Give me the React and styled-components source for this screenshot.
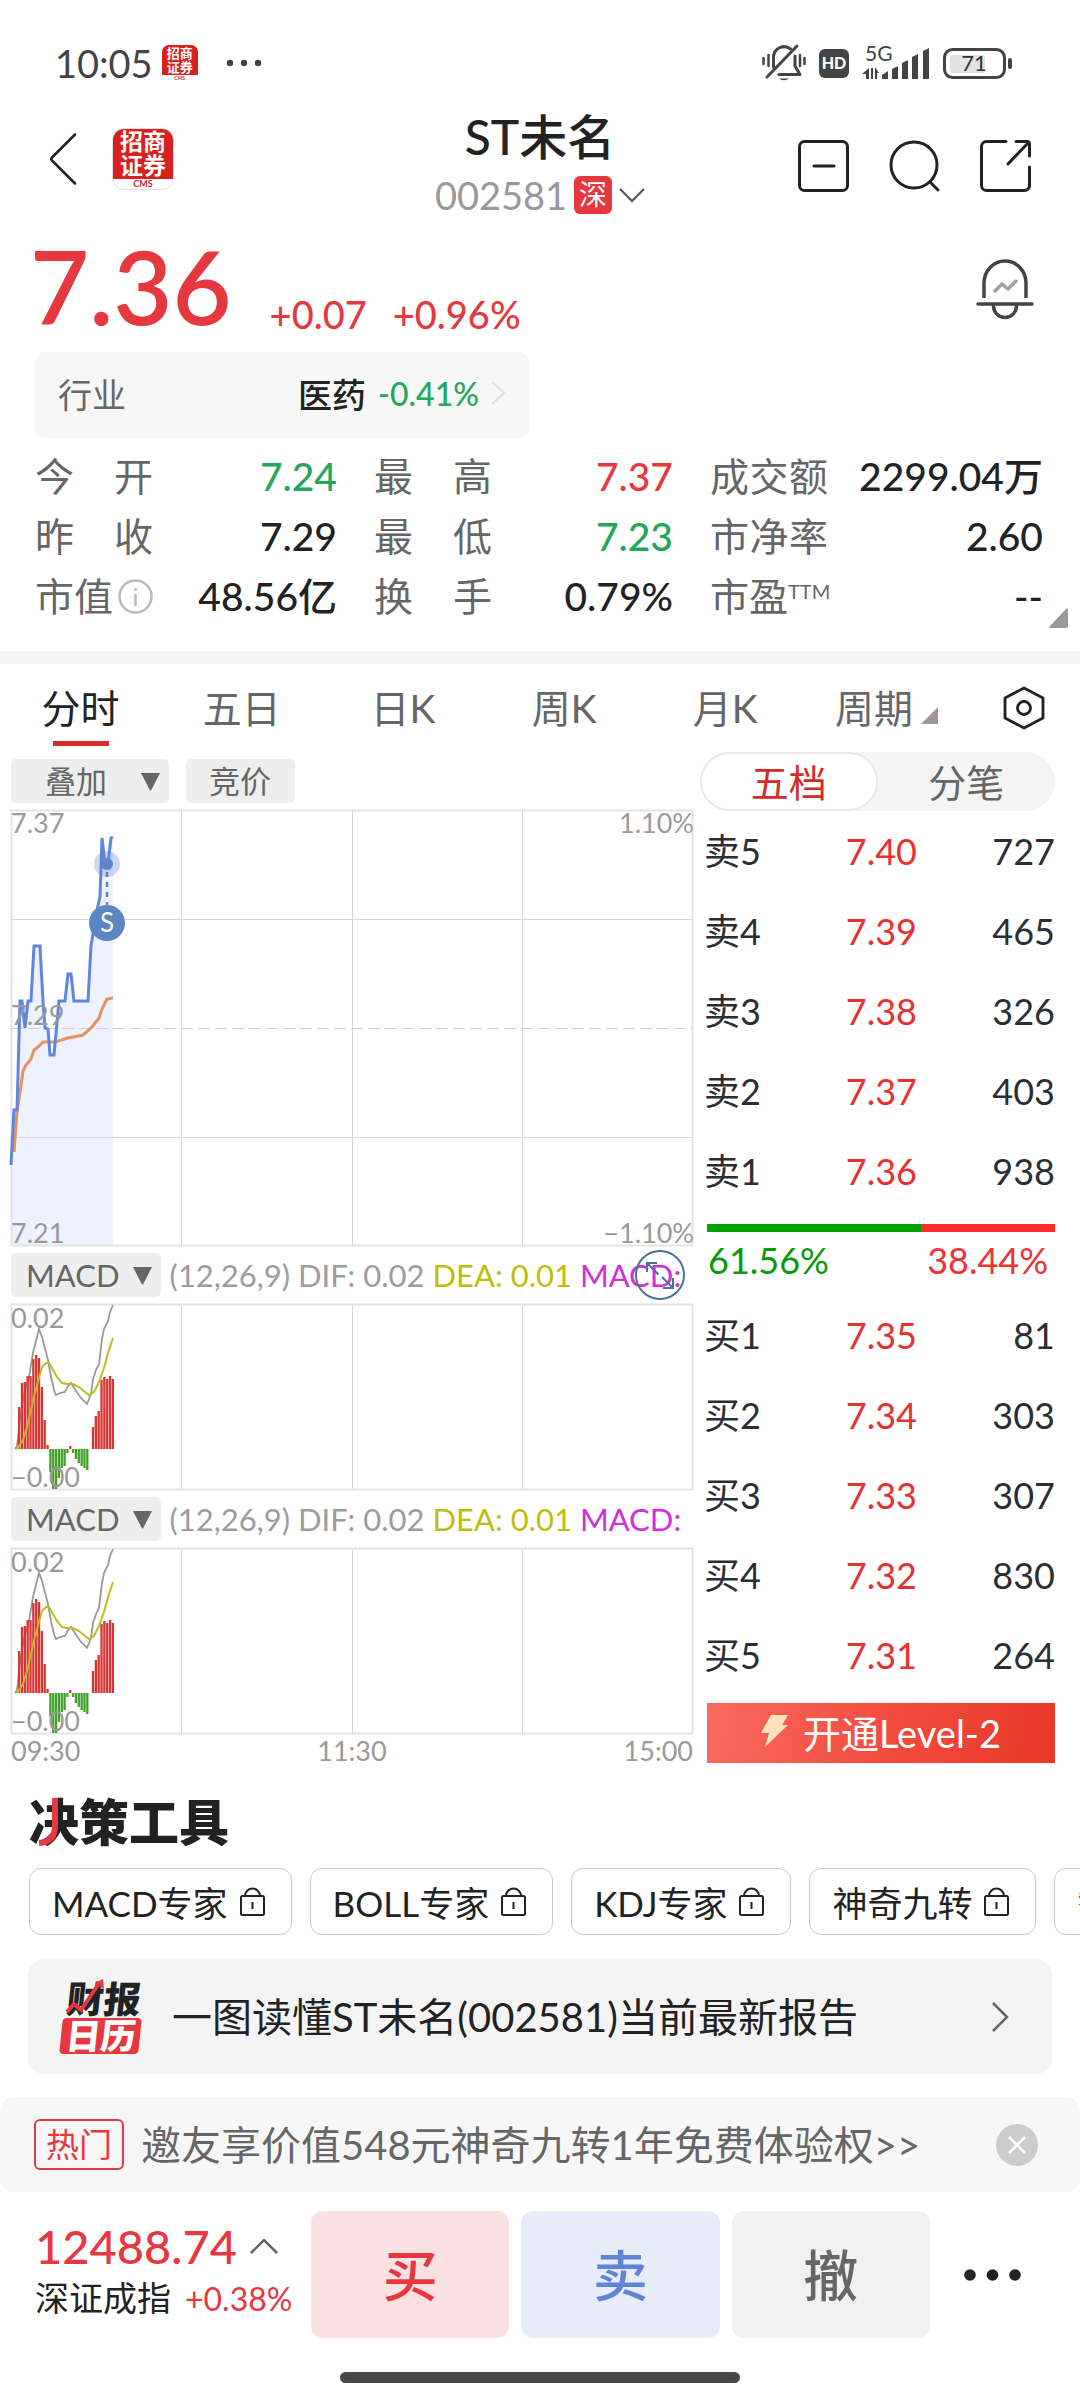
import { useState } from 'react';
import styled, { createGlobalStyle } from 'styled-components';

const GlobalStyle = createGlobalStyle`
  * {
    box-sizing: border-box;
  }

  body {
    margin: 0;
    background: #fff;
    color: #222;
    font-family: Lato, "Noto Sans CJK SC", sans-serif;
    overflow-x: hidden;
  }

  button {
    margin: 0;
    padding: 0;
    border: none;
    background: none;
    color: inherit;
    font: inherit;
    cursor: pointer;
  }

  svg {
    display: block;
    flex: none;
    overflow: visible;
  }

  h1, h2, p, dl, dd {
    margin: 0;
  }
`;

const RED = '#e5393f';
const GREEN = '#22a75d';

const tones = { up: RED, down: GREEN, flat: '#222' };

const Page = styled.div`
  display: flex;
  flex-direction: column;
`;

/* status bar */

const StatusBar = styled.div`
  display: flex;
  align-items: center;
  justify-content: space-between;
  padding: 43px 67px 0 55px;
  height: 83px;
  color: #444;
`;

const StatusGroup = styled.div`
  display: flex;
  align-items: center;
  gap: ${(p) => p.$gap}px;
`;

const Clock = styled.span`
  font-size: 38px;
  line-height: 40px;
`;

const LogoBox = styled.span`
  display: flex;
  flex-direction: column;
  justify-content: space-between;
  overflow: hidden;
  width: ${(p) => p.$size}px;
  height: ${(p) => p.$size}px;
  border-radius: ${(p) => (p.$size > 50 ? 12 : 7)}px;
  border: ${(p) => (p.$size > 50 ? 1 : 0)}px solid #e6dede;
  background: #fff;
`;

const LogoChars = styled.span`
  display: flex;
  flex: 1;
  align-items: center;
  justify-content: center;
  padding-bottom: 1px;
  background: #d8201f;
  color: #fff;
  font-size: ${(p) => p.$font}px;
  line-height: ${(p) => p.$font + 1}px;
  font-weight: 700;
  text-align: center;
`;

const LogoFoot = styled.span`
  color: #c9282a;
  font-size: ${(p) => p.$font}px;
  line-height: ${(p) => p.$font + 1}px;
  font-weight: 700;
  text-align: center;
`;

/* header */

const Header = styled.header`
  display: grid;
  grid-template-columns: 1fr auto 1fr;
  align-items: center;
  padding: 29px 49px 0;
`;

const HeaderLeft = styled.div`
  display: flex;
  align-items: center;
  gap: 35px;
  padding-bottom: 10px;
`;

const HeaderRight = styled.div`
  display: flex;
  justify-content: flex-end;
  gap: 40px;
  padding-top: 4px;
`;

const Title = styled.h1`
  font-size: 48px;
  line-height: 50px;
  font-weight: 500;
  text-align: center;
`;

const CodeRow = styled.button`
  display: flex;
  align-items: center;
  gap: 7px;
  margin-top: 13px;
  color: #999;
  font-size: 38px;
  line-height: 40px;
`;

const Market = styled.span`
  width: 38px;
  height: 38px;
  border-radius: 6px;
  background: ${RED};
  color: #fff;
  font-size: 28px;
  line-height: 37px;
  text-align: center;
`;

/* quote */

const Quote = styled.section`
  padding: 19px 37px 0 35px;
`;

const QuoteTop = styled.div`
  display: flex;
  align-items: center;
  justify-content: space-between;
  padding-right: 9px;
`;

const PriceLine = styled.div`
  display: flex;
  align-items: flex-end;
  gap: 26px;
  color: ${RED};
  font-size: 38px;
  line-height: 48px;
  font-weight: 500;
`;

const Price = styled.strong`
  margin: 0 12px 0 -5px;
  font-size: 102px;
  line-height: 104px;
  font-weight: 600;
`;

const Industry = styled.a`
  display: flex;
  align-items: center;
  width: 494px;
  height: 86px;
  margin-top: 14px;
  padding: 0 23px 4px;
  border-radius: 10px;
  background: #f7f7f7;
  color: #666;
  font-size: 34px;
  text-decoration: none;
`;

const IndustryName = styled.span`
  margin-left: auto;
  color: #222;
  font-weight: 500;
`;

const IndustryChange = styled.span`
  margin: 0 12px;
  color: ${GREEN};
  font-size: 32px;
  font-weight: 500;
`;

const StatGrid = styled.dl`
  display: grid;
  grid-template-columns: 302fr 299fr 333fr;
  column-gap: 37px;
  padding: 8px 0 25px;
`;

const Stat = styled.div`
  display: flex;
  align-items: center;
  justify-content: space-between;
  height: 60px;
  font-size: 39px;
  line-height: 60px;
  white-space: nowrap;
`;

const StatLabel = styled.dt`
  display: flex;
  align-items: center;
  justify-content: space-between;
  width: 118px;
  color: #666;
`;

const StatValue = styled.dd`
  color: ${(p) => tones[p.$tone]};
  font-weight: 500;
`;

const Sup = styled.sup`
  align-self: flex-start;
  margin-right: auto;
  font-size: 20px;
  line-height: 50px;
`;

const StatCorner = styled.svg`
  position: absolute;
  right: 12px;
  bottom: 23px;
`;

const StatWrap = styled.div`
  position: relative;
  margin: 0 -37px 0 0;
  padding-right: 37px;
`;

const Divider = styled.div`
  height: 13px;
  background: #f2f3f5;
`;

/* chart tabs */

const Tabs = styled.nav`
  display: flex;
  height: 88px;
`;

const Tab = styled.button`
  position: relative;
  display: flex;
  flex: 1;
  align-items: center;
  justify-content: center;
  gap: 8px;
  padding-bottom: 4px;
  color: ${(p) => (p.$active ? '#222' : '#666')};
  font-size: 39px;

  &::after {
    content: '';
    position: absolute;
    bottom: 6px;
    left: 50%;
    width: 56px;
    height: 5px;
    margin-left: -28px;
    background: ${(p) => (p.$active ? '#d92b2b' : 'transparent')};
  }
`;

const TabSettings = styled.button`
  display: flex;
  flex: none;
  align-items: center;
  justify-content: center;
  width: 113px;
`;

/* charts and order book */

const Board = styled.section`
  display: grid;
  grid-template-columns: minmax(0, 1fr) 355px;
  column-gap: 7px;
  padding: 0 25px 0 11px;
`;

const ChartColumn = styled.div`
  display: flex;
  flex-direction: column;
  gap: 7px;
  padding-top: 7px;
`;

const ToolRow = styled.div`
  position: relative;
  display: flex;
  align-items: center;
  gap: ${(p) => p.$gap}px;
  height: 44px;
  font-size: 32px;
  white-space: nowrap;
`;

const Chip = styled.button`
  display: flex;
  align-items: center;
  justify-content: space-between;
  height: 44px;
  padding: 0 ${(p) => p.$right}px 0 ${(p) => p.$left}px;
  gap: ${(p) => p.$gap || 0}px;
  border-radius: 5px;
  background: #eee;
  color: #666;
  font-size: 31px;
  line-height: 44px;
`;

const Legend = styled.span`
  color: ${(p) => p.$color};
  font-size: 31px;
`;

const ZoomButton = styled.button`
  position: absolute;
  top: -3px;
  right: 8px;
`;

const ChartSvg = styled.svg`
  width: 100%;
  height: auto;
  font-family: Lato, sans-serif;
  font-size: 27px;
  fill: #999;
`;

const TimeAxis = styled.div`
  display: flex;
  justify-content: space-between;
  color: #999;
  font-size: 27px;
  line-height: 20px;
`;

const BookColumn = styled.div`
  display: flex;
  flex-direction: column;
`;

const Segmented = styled.div`
  display: flex;
  height: 59px;
  border-radius: 30px;
  background: #f4f4f4;
`;

const Segment = styled.button`
  flex: 1;
  border: 2px solid ${(p) => (p.$active ? '#e9e9e9' : 'transparent')};
  border-radius: 30px;
  background: ${(p) => (p.$active ? '#fff' : 'transparent')};
  color: ${(p) => (p.$active ? '#d42a2a' : '#666')};
  font-size: 38px;
  line-height: 52px;
`;

const Book = styled.table`
  width: 100%;
  border-collapse: collapse;
  color: #2b2e33;
  font-size: 36px;
  line-height: 44px;

  td, th {
    height: 80px;
    padding: 0;
    font-weight: 400;
    text-align: right;
  }

  th {
    width: 80px;
    padding-left: 4px;
    text-align: left;
    white-space: nowrap;
  }

  td:nth-child(2) {
    width: 137px;
    color: #e8302f;
  }
`;

const RatioBar = styled.div`
  display: flex;
  height: 8px;
  margin: 13px 0 0 7px;
  background: #fd2a2a;
`;

const RatioSell = styled.div`
  background: #00a200;
`;

const RatioText = styled.div`
  display: flex;
  justify-content: space-between;
  padding: 0 7px 7px 8px;
  color: #f03236;
  font-size: 36px;
  line-height: 56px;

  span:first-child {
    color: #069a0a;
  }
`;

const LevelButton = styled.button`
  display: flex;
  align-items: center;
  justify-content: center;
  gap: 14px;
  height: 60px;
  margin: 8px 0 0 7px;
  padding-bottom: 4px;
  background: linear-gradient(100deg, #fb6a5e, #f04b3d 55%, #e93827);
  color: #fff;
  font-size: 38px;
`;

/* decision tools */

const Tools = styled.section`
  padding: 24px 0 0 29px;
`;

const ToolsTitle = styled.h2`
  position: relative;
  font-family: "Noto Sans CJK SC", sans-serif;
  font-size: 50px;
  line-height: 64px;
  font-weight: 900;

  svg {
    position: absolute;
    top: 11px;
    left: 9px;
  }
`;

const ToolList = styled.div`
  display: flex;
  gap: 18px;
  margin-top: 17px;
  overflow: hidden;
`;

const ToolPill = styled.button`
  display: flex;
  flex: none;
  align-items: center;
  gap: 12px;
  height: 67px;
  padding: 0 26px 0 22px;
  border: 1px solid #ccc;
  border-radius: 12px;
  color: #222;
  font-size: 35px;
  white-space: nowrap;
`;

const Report = styled.a`
  display: flex;
  align-items: center;
  height: 115px;
  margin: 24px 28px 0;
  padding: 0 43px 0 34px;
  border-radius: 16px;
  background: #f4f4f4;
  color: #222;
  font-size: 40px;
  text-decoration: none;
  white-space: nowrap;
`;

const ReportText = styled.span`
  flex: 1;
  margin-left: 29px;
  padding-bottom: 3px;
`;

const Promo = styled.div`
  display: flex;
  align-items: center;
  height: 95px;
  margin-top: 23px;
  padding: 0 42px 0 34px;
  border-radius: 14px;
  background: #f7f7f7;
`;

const HotTag = styled.span`
  height: 51px;
  padding: 0 10px;
  border: 2px solid ${RED};
  border-radius: 6px;
  color: ${RED};
  font-size: 33px;
  line-height: 46px;
`;

const PromoLink = styled.a`
  flex: 1;
  margin-left: 17px;
  padding-bottom: 3px;
  color: #666;
  font-size: 40px;
  text-decoration: none;
  white-space: nowrap;
`;

/* trade bar */

const TradeBar = styled.footer`
  display: flex;
  align-items: center;
  gap: 12px;
  padding: 19px 59px 0 35px;
`;

const IndexBox = styled.button`
  display: flex;
  flex-direction: column;
  align-items: flex-start;
  width: 264px;
  padding-bottom: 6px;
  white-space: nowrap;
`;

const IndexValue = styled.span`
  display: flex;
  align-items: center;
  gap: 13px;
  color: ${RED};
  font-size: 47px;
  line-height: 54px;
  font-weight: 500;
`;

const IndexName = styled.span`
  font-size: 34px;
  line-height: 50px;

  em {
    margin-left: 14px;
    color: ${RED};
    font-size: 32px;
    font-style: normal;
  }
`;

const TradeButton = styled.button`
  flex: 1;
  height: 127px;
  border-radius: 12px;
  background: ${(p) => p.$bg};
  color: ${(p) => p.$color};
  font-size: 55px;
  line-height: 120px;
  font-weight: 500;
`;

const MoreButton = styled.button`
  padding-left: 22px;
`;

const HomeBar = styled.div`
  width: 37%;
  height: 11px;
  margin: 34px auto 16px;
  border-radius: 6px;
  background: #484848;
`;

const sells = [
  ['卖5', '7.40', '727'],
  ['卖4', '7.39', '465'],
  ['卖3', '7.38', '326'],
  ['卖2', '7.37', '403'],
  ['卖1', '7.36', '938'],
];

const buys = [
  ['买1', '7.35', '81'],
  ['买2', '7.34', '303'],
  ['买3', '7.33', '307'],
  ['买4', '7.32', '830'],
  ['买5', '7.31', '264'],
];

const stats = [
  { label: '今开', value: '7.24', tone: 'down' },
  { label: '最高', value: '7.37', tone: 'up' },
  { label: '成交额', value: '2299.04万', tone: 'flat' },
  { label: '昨收', value: '7.29', tone: 'flat' },
  { label: '最低', value: '7.23', tone: 'down' },
  { label: '市净率', value: '2.60', tone: 'flat' },
  { label: '市值', value: '48.56亿', tone: 'flat', info: true },
  { label: '换手', value: '0.79%', tone: 'flat' },
  { label: '市盈', value: '--', tone: 'flat', sup: 'TTM' },
];

const tabs = ['分时', '五日', '日K', '周K', '月K', '周期'];
const tools = ['MACD专家', 'BOLL专家', 'KDJ专家', '神奇九转', '智能盯盘'];

const priceLine =
  '0,355 3,300 6,300 9,191 11,191 14,218 17,191 20,191 23,136 29,136 32,191 34,218 37,219 39,245 43,245 48,191 54,191 57,164 60,164 63,191 77,191 80,136 86,100 89,87 91,28 94,54 97,54 100,28 102,27';
const avgLine =
  '3,342 6,302 9,282 12,261 15,255 20,249 23,240 27,237 32,232 44,232 57,228 72,225 81,217 88,208 91,199 96,189 102,188';
const difLine =
  '4,145 6,142 9,115 13,90 18,73 22,49 26,33 28,25 31,33 37,56 40,73 43,86 45,91 49,89 54,88 57,82 60,79 65,87 70,94 76,100 80,90 82,75 85,66 88,60 91,35 93,25 97,17 99,8 102,1';
const deaLine =
  '4,145 7,144 12,136 16,123 22,97 29,70 31,63 35,59 38,59 42,66 46,73 51,79 56,80 62,80 68,83 74,88 78,91 83,88 88,78 93,64 97,49 102,34';
const macdBars = [
  42, 66, 67, 73, 73, 90, 94, 91, 62, 29, 4, -23, -40, -40, -29, -19, -17, -4, 3, -4, -10, -14, -17, -19, -21, 0,
  22, 33, 38, 69, 72, 70, 73, 70,
];

function Logo({ size }) {
  const font = size > 50 ? 23 : 13;
  return (
    <LogoBox $size={size}>
      <LogoChars $font={font}>招商<br />证券</LogoChars>
      <LogoFoot $font={size > 50 ? 9 : 5}>CMS</LogoFoot>
    </LogoBox>
  );
}

function Triangle() {
  return (
    <svg width="19" height="19" viewBox="0 0 19 19">
      <path d="M0 1h19L10 18.500H9z" fill="#666" />
    </svg>
  );
}

function Lock() {
  return (
    <svg width="25" height="30" viewBox="0 0 25 30" fill="none" stroke="#222" strokeWidth="2">
      <rect x="1" y="9" width="23" height="19" rx="1.500" />
      <path d="M5 9a7.500 7.500 0 0 1 15 0M12.500 15v7" />
    </svg>
  );
}

function StatusIcons() {
  return (
    <StatusGroup $gap={13}>
      <svg width="44" height="40" viewBox="0 0 44 40" fill="none" stroke="#444" strokeWidth="3" strokeLinecap="round">
        <path d="M11.500 24V14a10.500 10.500 0 0 1 17-8M5 34 35 3" />
        <path d="M33 13v10l5 8.500H17" strokeLinejoin="round" />
        <path d="M17 35.500h10a6 4 0 0 1-10 0z" fill="#444" stroke="none" />
        <path d="M1.500 15v6M6.500 12v11M38 12v11M42.500 15v6" strokeWidth="2.500" />
      </svg>
      <svg width="30" height="29" viewBox="0 0 30 29">
        <rect width="30" height="29" rx="6" fill="#444" />
        <text x="15" y="20" fill="#fff" fontFamily="Lato, sans-serif" fontSize="16" fontWeight="900" textAnchor="middle">
          HD
        </text>
      </svg>
      <svg width="68" height="36" viewBox="0 0 68 36" fill="#444">
        <text x="3" y="16" fontFamily="Lato, sans-serif" fontSize="21">5G</text>
        <path d="M7 23v11H4v-5H0zM9 23h2v11H9zM13 22l4 6h-2v6h-2z" />
        <path d="M20 30l6-4v8h-6zM30 24l6-3v13h-6zM40 18l6-3v19h-6zM50 12l6-3v25h-6zM61 6l6-3v31h-6z" />
      </svg>
      <svg width="70" height="31" viewBox="0 0 70 31">
        <rect x="1.500" y="1.500" width="60" height="28" rx="8" fill="none" stroke="#444" strokeWidth="3" />
        <rect x="7" y="7" width="35" height="18" rx="3" fill="#e2e2e2" />
        <rect x="65" y="10" width="4" height="11" rx="2" fill="#444" />
        <text x="31" y="23" fill="#333" fontFamily="Lato, sans-serif" fontSize="22" textAnchor="middle">71</text>
      </svg>
    </StatusGroup>
  );
}

function Grid({ height }) {
  return (
    <g fill="none" stroke="#d6d6d6">
      <path d={`M170.500 0v${height}M341.500 0v${height}M511.500 0v${height}`} />
      <rect x="0.500" y="0.500" width="681" height={height - 1} stroke="#e4e4e4" strokeWidth="2" />
    </g>
  );
}

function PriceChart() {
  return (
    <ChartSvg viewBox="0 0 682 436" role="img" aria-label="分时">
      <polygon points={`${priceLine} 102,436 0,436`} fill="#edf2fe" />
      <Grid height={436} />
      <path d="M0 109.500h682M0 327.500h682" stroke="#d9d9d9" />
      <path d="M0 218.500h682" stroke="#d0d0d0" strokeDasharray="12 5" />
      <polyline points={avgLine} fill="none" stroke="#e8915a" strokeWidth="3" />
      <polyline points={priceLine} fill="none" stroke="#5f86de" strokeWidth="3" />
      <circle cx="96" cy="54" r="13" fill="#5b86c2" opacity="0.3" />
      <circle cx="96" cy="54" r="6" fill="#5b86c2" />
      <path d="M96 62v34" stroke="#5b86c2" strokeWidth="2.500" strokeDasharray="5 5" />
      <circle cx="96" cy="113" r="18" fill="#5b86c2" />
      <text x="96" y="122" fill="#fff" fontSize="26" textAnchor="middle">S</text>
      <text x="0" y="23">7.37</text>
      <text x="0" y="215">7.29</text>
      <text x="0" y="433">7.21</text>
      <text x="683" y="23" textAnchor="end">1.10%</text>
      <text x="683" y="433" textAnchor="end">−1.10%</text>
    </ChartSvg>
  );
}

function MacdPanel({ zoom }) {
  return (
    <>
      <ToolRow $gap={8}>
        <Chip $left={15} $right={9} $gap={14}>
          MACD
          <Triangle />
        </Chip>
        <Legend $color="#9c9ca0">(12,26,9)</Legend>
        <Legend $color="#9c9ca0">DIF: 0.02</Legend>
        <Legend $color="#bfbd0c">DEA: 0.01</Legend>
        <Legend $color="#d12fdc">MACD:</Legend>
        {zoom && (
          <ZoomButton aria-label="全屏">
            <svg width="50" height="50" viewBox="0 0 50 50" fill="none" stroke="#4a7296" strokeWidth="2">
              <circle cx="25" cy="25" r="24" />
              <path d="M12 22V13h10M12.500 13.500l11 11M38 28v10H28M37.500 37.500 27 27" />
            </svg>
          </ZoomButton>
        )}
      </ToolRow>
      <ChartSvg viewBox="0 0 682 186" role="img" aria-label="MACD">
        <Grid height={186} />
        <polyline points={difLine} fill="none" stroke="#999" strokeWidth="1.800" />
        {macdBars.map((v, i) => (
          <rect
            key={i}
            x={7 + i * 2.84}
            y={v > 0 ? 145 - v : 145}
            width="2.3"
            height={Math.abs(v)}
            fill={v > 0 ? '#d93432' : '#3fa02a'}
          />
        ))}
        <polyline points={deaLine} fill="none" stroke="#bfbd1c" strokeWidth="2" />
        <text x="0" y="24">0.02</text>
        <text x="0" y="183">−0.00</text>
      </ChartSvg>
    </>
  );
}

function BookRows({ rows }) {
  return (
    <Book>
      <tbody>
        {rows.map(([name, price, amount]) => (
          <tr key={name}>
            <th scope="row">{name}</th>
            <td>{price}</td>
            <td>{amount}</td>
          </tr>
        ))}
      </tbody>
    </Book>
  );
}

function App() {
  const [tab, setTab] = useState('分时');
  const [book, setBook] = useState('五档');
  const [promo, setPromo] = useState(true);

  return (
    <Page>
      <GlobalStyle />
      <StatusBar>
        <StatusGroup $gap={9}>
          <Clock>10:05</Clock>
          <Logo size={36} />
          <svg width="62" height="8" viewBox="0 0 62 8" fill="#444">
            <circle cx="23" cy="4" r="3.200" />
            <circle cx="37" cy="4" r="3.200" />
            <circle cx="51" cy="4" r="3.200" />
          </svg>
        </StatusGroup>
        <StatusIcons />
      </StatusBar>

      <Header>
        <HeaderLeft>
          <button aria-label="返回">
            <svg width="28" height="52" viewBox="0 0 28 52" fill="none" stroke="#222" strokeWidth="2.500" strokeLinecap="round" strokeLinejoin="round">
              <path d="M26 1.500 3 24.500q-1.500 1.500 0 3l23 23" />
            </svg>
          </button>
          <Logo size={62} />
        </HeaderLeft>
        <div>
          <Title>ST未名</Title>
          <CodeRow>
            002581
            <Market>深</Market>
            <svg width="26" height="15" viewBox="0 0 26 15" fill="none" stroke="#555" strokeWidth="2.200">
              <path d="M1 1l12 12L25 1" />
            </svg>
          </CodeRow>
        </div>
        <HeaderRight>
          <button aria-label="删自选">
            <svg width="51" height="52" viewBox="0 0 51 52" fill="none" stroke="#222" strokeWidth="3" strokeLinecap="round">
              <rect x="1.500" y="1.500" width="48" height="49" rx="5" />
              <path d="M16 26h20" />
            </svg>
          </button>
          <button aria-label="搜索">
            <svg width="51" height="52" viewBox="0 0 51 52" fill="none" stroke="#222" strokeWidth="3" strokeLinecap="round">
              <circle cx="25" cy="25" r="23" />
              <path d="M41 42l8 8" />
            </svg>
          </button>
          <button aria-label="分享">
            <svg width="51" height="52" viewBox="0 0 51 52" fill="none" stroke="#222" strokeWidth="3" strokeLinecap="round" strokeLinejoin="round">
              <path d="M26 1.500H6.500a5 5 0 0 0-5 5v39a5 5 0 0 0 5 5h38a5 5 0 0 0 5-5V27M36 1.500h11q2.500 0 2.500 2.500v12M48 3 28 24" />
            </svg>
          </button>
        </HeaderRight>
      </Header>

      <Quote>
        <QuoteTop>
          <PriceLine>
            <Price>7.36</Price>
            <span>+0.07</span>
            <span>+0.96%</span>
          </PriceLine>
          <button aria-label="预警">
            <svg width="58" height="60" viewBox="0 0 58 60" fill="none" stroke="#444" strokeWidth="3.500" strokeLinecap="round">
              <path d="M8 42V27a21 22 0 0 1 42 0v15" strokeLinecap="butt" />
              <path d="M2 48h54" />
              <path d="M17.500 50a11.500 11.500 0 0 0 23 0" />
              <path d="M19 35l7-7 6 5 8-8" stroke="#a0a0a0" strokeLinejoin="round" />
            </svg>
          </button>
        </QuoteTop>
        <Industry href="#industry">
          行业
          <IndustryName>医药</IndustryName>
          <IndustryChange>-0.41%</IndustryChange>
          <svg width="15" height="24" viewBox="0 0 15 24" fill="none" stroke="#e0e0e0" strokeWidth="2">
            <path d="M1 1l12 11L1 23" />
          </svg>
        </Industry>
        <StatWrap>
          <StatGrid>
            {stats.map((s) => (
              <Stat key={s.label}>
                <StatLabel>
                  {s.info || s.sup ? <span>{s.label}</span> : [...s.label].map((c) => <span key={c}>{c}</span>)}
                  {s.sup && <Sup>{s.sup}</Sup>}
                  {s.info && (
                    <svg width="35" height="35" viewBox="0 0 35 35" fill="none" stroke="#bbb" strokeWidth="2.500">
                      <circle cx="17.500" cy="17.500" r="16" />
                      <path d="M17.500 15v12M17.500 9v3" />
                    </svg>
                  )}
                </StatLabel>
                <StatValue $tone={s.tone}>{s.value}</StatValue>
              </Stat>
            ))}
          </StatGrid>
          <StatCorner width="19" height="20" viewBox="0 0 19 20">
            <path d="M17 1q2-2 2 1v16q0 2-2 2H2q-3 0-1-2z" fill="#999" />
          </StatCorner>
        </StatWrap>
      </Quote>

      <Divider />

      <Tabs>
        {tabs.map((t) => (
          <Tab key={t} $active={t === tab} onClick={() => setTab(t)}>
            {t}
            {t === '周期' && (
              <svg width="17" height="32" viewBox="0 0 17 32">
                <path d="M17 17v17H0z" fill="#a09696" />
              </svg>
            )}
          </Tab>
        ))}
        <TabSettings aria-label="设置">
          <svg width="42" height="44" viewBox="0 0 42 44" fill="none" stroke="#222" strokeWidth="2.800" strokeLinejoin="round">
            <path d="M21 2 40 12v20L21 42 2 32V12z" />
            <circle cx="21" cy="22" r="6.500" />
          </svg>
        </TabSettings>
      </Tabs>

      <Board>
        <ChartColumn>
          <ToolRow $gap={17}>
            <Chip $left={34} $right={9} $gap={34}>
              叠加
              <Triangle />
            </Chip>
            <Chip $left={23} $right={24}>竞价</Chip>
          </ToolRow>
          <PriceChart />
          <MacdPanel zoom />
          <MacdPanel />
          <TimeAxis>
            <span>09:30</span>
            <span>11:30</span>
            <span>15:00</span>
          </TimeAxis>
        </ChartColumn>

        <BookColumn>
          <Segmented>
            {['五档', '分笔'].map((s) => (
              <Segment key={s} $active={s === book} onClick={() => setBook(s)}>
                {s}
              </Segment>
            ))}
          </Segmented>
          <BookRows rows={sells} />
          <RatioBar>
            <RatioSell style={{ width: '61.56%' }} />
          </RatioBar>
          <RatioText>
            <span>61.56%</span>
            <span>38.44%</span>
          </RatioText>
          <BookRows rows={buys} />
          <LevelButton>
            <svg width="28" height="32" viewBox="0 0 28 32">
              <path d="M10 0h17l-6 10h6L4 32l4-14H0z" fill="#fde3bd" />
            </svg>
            开通Level-2
          </LevelButton>
        </BookColumn>
      </Board>

      <Tools>
        <ToolsTitle>
          决策工具
          <svg width="22" height="50" viewBox="0 0 22 50" fill="none" stroke={RED} strokeWidth="6">
            <path d="M17 0v28q0 16-16 17" />
          </svg>
        </ToolsTitle>
        <ToolList>
          {tools.map((t) => (
            <ToolPill key={t}>
              {t}
              <Lock />
            </ToolPill>
          ))}
        </ToolList>
      </Tools>

      <Report href="#report">
        <svg width="81" height="76" viewBox="0 0 81 76" fontFamily="Noto Sans CJK SC, sans-serif" fontWeight="900" fontSize="37">
          <g transform="skewX(-6)">
            <text x="7" y="34" fill="#222">财报</text>
            <rect x="5" y="39" width="79" height="36" rx="4" fill={RED} />
            <text x="10" y="70" fill="#fff" fontSize="35">日历</text>
          </g>
          <path d="M5 33l7-8 7 6L38 3" fill="none" stroke={RED} strokeWidth="4" />
          <path d="M33 4l8-4 1 10z" fill={RED} />
        </svg>
        <ReportText>一图读懂ST未名(002581)当前最新报告</ReportText>
        <svg width="17" height="30" viewBox="0 0 17 30" fill="none" stroke="#666" strokeWidth="2.500">
          <path d="M1 1l14 14L1 29" />
        </svg>
      </Report>

      {promo && (
        <Promo>
          <HotTag>热门</HotTag>
          <PromoLink href="#promo">邀友享价值548元神奇九转1年免费体验权&gt;&gt;</PromoLink>
          <button aria-label="关闭" onClick={() => setPromo(false)}>
            <svg width="42" height="42" viewBox="0 0 42 42" fill="none" stroke="#fff" strokeWidth="2.500">
              <circle cx="21" cy="21" r="21" fill="#ccc" stroke="none" />
              <path d="M13 13l16 16M29 13 13 29" />
            </svg>
          </button>
        </Promo>
      )}

      <TradeBar>
        <IndexBox>
          <IndexValue>
            12488.74
            <svg width="28" height="16" viewBox="0 0 28 16" fill="none" stroke="#666" strokeWidth="2.500">
              <path d="M1 15 14 2l13 13" />
            </svg>
          </IndexValue>
          <IndexName>
            深证成指<em>+0.38%</em>
          </IndexName>
        </IndexBox>
        <TradeButton $bg="#fce1e2" $color={RED}>买</TradeButton>
        <TradeButton $bg="#e6edf9" $color="#5f86d6">卖</TradeButton>
        <TradeButton $bg="#f1f1f1" $color="#666">撤</TradeButton>
        <MoreButton aria-label="更多">
          <svg width="57" height="12" viewBox="0 0 57 12" fill="#222">
            <circle cx="6" cy="6" r="5.800" />
            <circle cx="28.500" cy="6" r="5.800" />
            <circle cx="51" cy="6" r="5.800" />
          </svg>
        </MoreButton>
      </TradeBar>
      <HomeBar />
    </Page>
  );
}

export default App;
